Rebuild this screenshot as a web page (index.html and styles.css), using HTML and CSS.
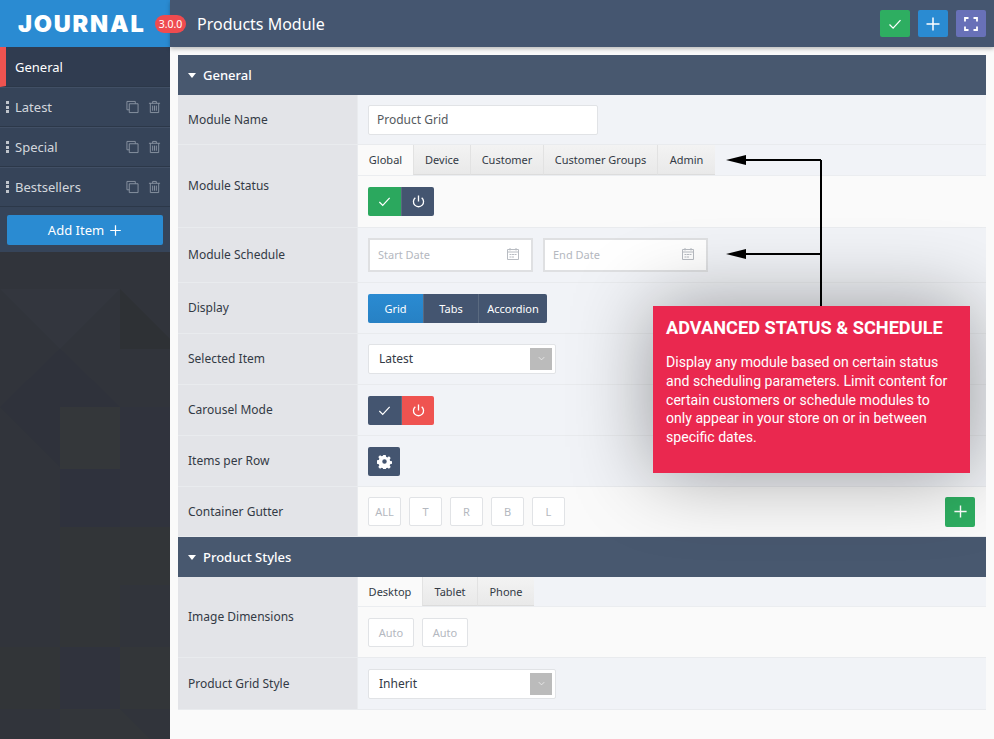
FILE: index.html
```html
<!DOCTYPE html>
<html lang="en">
<head>
    <meta charset="UTF-8">
    <title>Products Module</title>
    <link rel="stylesheet" href="styles.css">
</head>
<body>
    <svg class="defs" width="0" height="0">
        <symbol id="i-check" viewBox="0 0 16 16"><path d="M2.500 8.500l3.600 3.600 7.400-8" fill="none" stroke="currentColor" stroke-width="1.300"/></symbol>
        <symbol id="i-power" viewBox="0 0 16 16"><path d="M8 1.500v6.500M4.600 4a5.400 5.400 0 1 0 6.800 0" fill="none" stroke="currentColor" stroke-width="1.400"/></symbol>
        <symbol id="i-plus" viewBox="0 0 16 16"><path d="M8 1.500v13M1.500 8h13" fill="none" stroke="currentColor" stroke-width="1.500"/></symbol>
        <symbol id="i-chevron" viewBox="0 0 16 16"><path d="M4 6l4 4 4-4" fill="none" stroke="currentColor" stroke-width="1.200"/></symbol>
        <symbol id="i-cal" viewBox="0 0 14 14"><path d="M1.500 2.500h11v10h-11zM1.500 5h11M4 1v2.500M10 1v2.500" fill="none" stroke="currentColor"/><path d="M3.500 7h2v1h-2zM6 7h2v1H6zM8.500 7h2v1h-2zM3.500 9.500h2v1h-2zM6 9.500h2v1H6z" fill="currentColor"/></symbol>
        <symbol id="i-copy" viewBox="0 0 14 14"><path d="M3.500 10H1V1h9v2.500" fill="none" stroke="currentColor"/><path d="M3.500 3.500h9.500V13H3.500z" fill="none" stroke="currentColor"/></symbol>
        <symbol id="i-trash" viewBox="0 0 14 14"><path d="M1 3h12M5 3V1h4v2M2.500 3v10h9V3M5 5.500V11M7 5.500V11M9 5.500V11" fill="none" stroke="currentColor"/></symbol>
        <symbol id="i-gear" viewBox="0 0 16 16"><path fill-rule="evenodd" d="M6.700 1h2.600l.4 2 1.300.6 1.800-1.100 1.800 1.800-1.100 1.800.6 1.300 2 .4v2.600l-2 .4-.6 1.300 1.100 1.800-1.800 1.800-1.800-1.100-1.300.6-.4 2H6.700l-.4-2-1.300-.6-1.800 1.100-1.800-1.800 1.100-1.800-.6-1.300-2-.4V6.700l2-.4.6-1.300-1.100-1.800 1.800-1.800L5 2.500l1.300-.6zM8 5.600a2.400 2.400 0 1 0 0 4.800 2.400 2.400 0 0 0 0-4.800z" fill="currentColor"/></symbol>
        <symbol id="i-expand" viewBox="0 0 16 16"><path d="M2 5.500V2h3.500M10.500 2H14v3.500M14 10.500V14h-3.500M5.500 14H2v-3.500" fill="none" stroke="currentColor" stroke-width="1.800"/></symbol>
    </svg>

    <div class="page">
        <aside class="sidebar">
            <div class="logo"><span class="logo-text">JOURNAL</span><span class="version">3.0.0</span></div>
            <div class="side-item side-active">General</div>
            <div class="side-item">
                <span class="grip"></span><span class="side-name">Latest</span>
                <svg class="side-icon"><use href="#i-copy"/></svg>
                <svg class="side-icon"><use href="#i-trash"/></svg>
            </div>
            <div class="side-item">
                <span class="grip"></span><span class="side-name">Special</span>
                <svg class="side-icon"><use href="#i-copy"/></svg>
                <svg class="side-icon"><use href="#i-trash"/></svg>
            </div>
            <div class="side-item">
                <span class="grip"></span><span class="side-name">Bestsellers</span>
                <svg class="side-icon"><use href="#i-copy"/></svg>
                <svg class="side-icon"><use href="#i-trash"/></svg>
            </div>
            <div class="side-add">
                <button class="add-btn" type="button">Add Item <svg class="add-plus"><use href="#i-plus"/></svg></button>
            </div>
            <!-- fondo con triangulos -->
            <svg class="side-pattern" viewBox="0 0 170 487" preserveAspectRatio="none">
                <path d="M0 37l60 60 60-60z" fill="#33363e"/>
                <path d="M120 37v60h50V87z" fill="#2e3135"/>
                <path d="M0 155l60-58 60 58H60v60z" fill="#2f323b"/>
                <path d="M60 155h60v62H60z" fill="#34373a"/>
                <path d="M120 155h50v120h-50z" fill="#30333d"/>
                <path d="M60 217h60v58H60z" fill="#2f323d"/>
                <path d="M60 275h110v58H60z" fill="#323538"/>
                <path d="M60 333h60v62H60z" fill="#323538"/>
                <path d="M60 395h60v62H60z" fill="#30333d"/>
                <path d="M120 395h50v62h-50z" fill="#333639"/>
                <path d="M0 395h60v62H0z" fill="#323538"/>
                <path d="M60 457h60l30 30H60z" fill="#33363a"/>
            </svg>
        </aside>

        <div class="main">
            <header class="topbar">
                <h1 class="title">Products Module</h1>
                <div class="top-actions">
                    <button class="top-btn btn-green" type="button"><svg class="top-icon"><use href="#i-check"/></svg></button>
                    <button class="top-btn btn-blue" type="button"><svg class="top-icon"><use href="#i-plus"/></svg></button>
                    <button class="top-btn btn-purple" type="button"><svg class="top-icon"><use href="#i-expand"/></svg></button>
                </div>
            </header>

            <div class="content">
                <h2 class="section-head"><span class="caret"></span>General</h2>

                <div class="row row-name">
                    <div class="label">Module Name</div>
                    <div class="field"><div class="text-input">Product Grid</div></div>
                </div>

                <div class="row row-status">
                    <div class="label label-up">Module Status</div>
                    <div class="field field-tabs">
                        <div class="tabs">
                            <span class="tab tab-active tab-global">Global</span>
                            <span class="tab tab-device">Device</span>
                            <span class="tab tab-customer">Customer</span>
                            <span class="tab tab-groups">Customer Groups</span>
                            <span class="tab tab-admin">Admin</span>
                        </div>
                        <div class="tab-body">
                            <div class="toggle">
                                <span class="seg seg-green"><svg class="seg-icon"><use href="#i-check"/></svg></span>
                                <span class="seg seg-dark"><svg class="seg-icon"><use href="#i-power"/></svg></span>
                            </div>
                        </div>
                    </div>
                </div>

                <div class="row row-schedule">
                    <div class="label label-up">Module Schedule</div>
                    <div class="field field-dates">
                        <div class="date-input">Start Date<svg class="cal"><use href="#i-cal"/></svg></div>
                        <div class="date-input">End Date<svg class="cal"><use href="#i-cal"/></svg></div>
                    </div>
                </div>

                <div class="row row-std">
                    <div class="label label-up">Display</div>
                    <div class="field">
                        <div class="toggle">
                            <span class="seg seg-text seg-blue seg-grid">Grid</span>
                            <span class="seg seg-text seg-dark seg-tabs">Tabs</span>
                            <span class="seg seg-text seg-dark seg-acc">Accordion</span>
                        </div>
                    </div>
                </div>

                <div class="row row-std">
                    <div class="label label-up">Selected Item</div>
                    <div class="field">
                        <div class="select select-up">Latest<span class="select-arrow"><svg class="chevron"><use href="#i-chevron"/></svg></span></div>
                    </div>
                </div>

                <div class="row row-std">
                    <div class="label label-up">Carousel Mode</div>
                    <div class="field">
                        <div class="toggle">
                            <span class="seg seg-dark"><svg class="seg-icon"><use href="#i-check"/></svg></span>
                            <span class="seg seg-red"><svg class="seg-icon"><use href="#i-power"/></svg></span>
                        </div>
                    </div>
                </div>

                <div class="row row-std">
                    <div class="label label-up">Items per Row</div>
                    <div class="field">
                        <div class="toggle"><span class="seg seg-dark seg-gear"><svg class="seg-icon"><use href="#i-gear"/></svg></span></div>
                    </div>
                </div>

                <div class="row row-gutter">
                    <div class="label">Container Gutter</div>
                    <div class="field field-white field-gutter">
                        <span class="small-input">ALL</span>
                        <span class="small-input">T</span>
                        <span class="small-input">R</span>
                        <span class="small-input">B</span>
                        <span class="small-input">L</span>
                        <button class="gutter-add" type="button"><svg class="seg-icon"><use href="#i-plus"/></svg></button>
                    </div>
                </div>

                <h2 class="section-head"><span class="caret"></span>Product Styles</h2>

                <div class="row row-dims">
                    <div class="label label-up">Image Dimensions</div>
                    <div class="field field-tabs">
                        <div class="tabs tabs-short">
                            <span class="tab tab-active tab-desktop">Desktop</span>
                            <span class="tab tab-tablet">Tablet</span>
                            <span class="tab tab-phone">Phone</span>
                        </div>
                        <div class="tab-body tab-body-auto">
                            <span class="small-input small-auto">Auto</span>
                            <span class="small-input small-auto">Auto</span>
                        </div>
                    </div>
                </div>

                <div class="row row-last">
                    <div class="label">Product Grid Style</div>
                    <div class="field">
                        <div class="select">Inherit<span class="select-arrow"><svg class="chevron"><use href="#i-chevron"/></svg></span></div>
                    </div>
                </div>

                <!-- flechas y nota encima del formulario -->
                <svg class="arrows" width="112" height="160" viewBox="0 0 112 160">
                    <path d="M95 14v146M18 14h77M18 108h77" fill="none" stroke="#000" stroke-width="2"/>
                    <path d="M0 14l20-5v10zM0 108l20-5v10z" fill="#000"/>
                </svg>
                <div class="callout">
                    <h3 class="callout-title">ADVANCED STATUS &amp; SCHEDULE</h3>
                    <p class="callout-text">Display any module based on certain status and scheduling parameters. Limit content for certain customers or schedule modules to only appear in your store on or in between specific dates.</p>
                </div>
            </div>
        </div>
    </div>
</body>
</html>
```

FILE: styles.css
```css
* {
    box-sizing: border-box;
}

html, body {
    margin: 0;
    padding: 0;
    height: 100%;
    overflow: hidden;
}

body {
    background-color: #fafafa;
    color: #333a45;
    font-family: "Noto Sans", Arial, sans-serif;
    font-size: 12px;
}

.defs {
    position: absolute;
}

.page {
    display: flex;
    height: 739px;
}

/* Barra lateral */
.sidebar {
    width: 170px;
    flex: none;
    display: flex;
    flex-direction: column;
    background-color: #31343b;
    color: #fff;
}

.logo {
    height: 47px;
    flex: none;
    display: flex;
    align-items: center;
    padding-left: 18px;
    background-color: #2a8bd2;
    position: relative;
}

.logo-text {
    font-family: Inter, "Liberation Sans", sans-serif;
    font-weight: 900;
    font-size: 23.500px;
    letter-spacing: 1.800px;
}

.version {
    position: absolute;
    left: 155px;
    top: 15px;
    width: 31px;
    height: 18px;
    border-radius: 9px;
    background-color: #ef4b4f;
    font-size: 10.500px;
    line-height: 18px;
    text-align: center;
    z-index: 2;
}

.side-item {
    height: 40px;
    flex: none;
    display: flex;
    align-items: center;
    padding: 0 9px 0 6px;
    background-color: #364459;
    border-bottom: 1px solid #2c3849;
    border-top: 1px solid #414f65;
    font-size: 13px;
    color: #d3d7dd;
}

.side-active {
    background-color: #303c50;
    border-left: 6px solid #ef5350;
    border-top: 0;
    padding-left: 9px;
    color: #fff;
}

.grip {
    width: 3px;
    height: 12px;
    margin-right: 6px;
    background: repeating-linear-gradient(#c0c5cc 0 3px, transparent 3px 4.500px);
}

.side-name {
    flex: 1;
}

.side-icon {
    width: 13px;
    height: 14px;
    margin-left: 9px;
    color: #8b95a3;
}

.side-add {
    height: 45px;
    flex: none;
    padding: 8px 7px 7px;
    background-color: #364459;
}

.add-btn {
    width: 156px;
    height: 30px;
    display: flex;
    align-items: center;
    justify-content: center;
    gap: 5px;
    border: none;
    border-radius: 2px;
    background-color: #2a8bd2;
    color: #fff;
    font-family: inherit;
    font-size: 13px;
}

.add-plus {
    width: 13px;
    height: 13px;
}

.side-pattern {
    flex: 1;
    width: 170px;
    min-height: 0;
}

/* Parte principal */
.main {
    flex: 1;
    min-width: 0;
}

.topbar {
    height: 47px;
    display: flex;
    align-items: center;
    justify-content: space-between;
    padding: 0 8px 0 27px;
    background-color: #455670;
    box-shadow: 0 2px 4px rgba(0, 0, 0, 0.25);
    position: relative;
}

.title {
    margin: 0;
    color: #fff;
    font-size: 16px;
    font-weight: 400;
}

.top-actions {
    display: flex;
    gap: 8px;
}

.top-btn {
    width: 30px;
    height: 27px;
    padding: 0;
    display: flex;
    align-items: center;
    justify-content: center;
    border: none;
    border-radius: 2px;
    color: #fff;
}

.top-icon {
    width: 16px;
    height: 16px;
}

.btn-green {
    background-color: #2eae61;
}

.btn-blue {
    background-color: #2a8bd2;
}

.btn-purple {
    background-color: #6871b8;
}

.content {
    margin: 8px 8px 0;
    position: relative;
    overflow: hidden;
}

.section-head {
    height: 40px;
    margin: 0;
    display: flex;
    align-items: center;
    padding-left: 10px;
    background-color: #48586f;
    color: #fff;
    font-size: 13px;
    font-weight: 500;
}

.caret {
    width: 0;
    height: 0;
    margin-right: 7px;
    border-left: 4.500px solid transparent;
    border-right: 4.500px solid transparent;
    border-top: 5px solid #fff;
}

.row {
    display: flex;
    border-bottom: 1px solid #e9ebee;
}

.row-name {
    height: 50px;
}

.row-status {
    height: 83px;
}

.row-schedule {
    height: 55px;
}

.row-std {
    height: 51px;
}

.row-gutter {
    height: 50px;
}

.row-dims {
    height: 81px;
}

.row-last {
    height: 52px;
}

.label {
    width: 180px;
    flex: none;
    display: flex;
    align-items: center;
    padding-left: 10px;
    background-color: #e3e4e8;
    border-right: 1px solid #e9ebee;
    color: #333a45;
}

.label-up {
    padding-bottom: 2px;
}

.field {
    flex: 1;
    display: flex;
    align-items: center;
    padding-left: 10px;
    background-color: #f1f3f7;
}

.field-white, .field-tabs {
    background-color: #fafafa;
}

.field-tabs {
    flex-direction: column;
    align-items: stretch;
    padding-left: 0;
}

.tabs {
    height: 31px;
    display: flex;
    flex: none;
    background-color: #f1f3f7;
    border-bottom: 1px solid #ebedf0;
}

.tabs-short {
    height: 30px;
}

.tab {
    height: 100%;
    display: flex;
    align-items: center;
    justify-content: center;
    background: linear-gradient(#f3f3f3, #e9e9e9);
    border-left: 1px solid #e2e2e2;
    border-bottom: 1px solid #dcdcdc;
    font-size: 11px;
}

.tab-active {
    background: #fafafa;
    border-left: 0;
    border-bottom-color: #fafafa;
}

.tab-global { width: 55px; }
.tab-device { width: 57px; }
.tab-customer { width: 73px; }
.tab-groups { width: 114px; }
.tab-admin { width: 58px; }
.tab-desktop { width: 64px; }
.tab-tablet { width: 55px; }
.tab-phone { width: 57px; }

.tab-body {
    flex: 1;
    display: flex;
    align-items: center;
    padding-left: 10px;
}

.tab-body-auto {
    gap: 8px;
}

.text-input {
    width: 230px;
    height: 30px;
    display: flex;
    align-items: center;
    padding-left: 8px;
    background-color: #fff;
    border: 1px solid #e1e3e6;
    border-radius: 2px;
    color: #555a60;
}

.toggle {
    display: flex;
}

.seg {
    width: 33px;
    height: 29px;
    display: flex;
    align-items: center;
    justify-content: center;
    color: #fff;
}

.seg:first-child {
    border-radius: 2px 0 0 2px;
}

.seg:last-child {
    border-radius: 0 2px 2px 0;
    border-left: 1px solid #5a6a80;
}

.seg:only-child {
    width: 32px;
    border: 0;
    border-radius: 2px;
}

.seg-icon {
    width: 15px;
    height: 15px;
}

.seg-green {
    background-color: #2ba85e;
}

.seg-dark {
    background-color: #445570;
}

.seg-red {
    background-color: #ef5350;
}

.seg-blue {
    background: linear-gradient(#2a8bd2, #2781c4);
}

.seg-text {
    font-size: 11px;
}

.seg-grid { width: 55px; }
.seg-tabs { width: 55px; border-left: 1px solid #5a6a80; }
.seg-acc { width: 69px; }

.field-dates {
    gap: 10px;
}

.date-input {
    width: 165px;
    height: 34px;
    display: flex;
    align-items: center;
    justify-content: space-between;
    padding: 0 11px 2px 8px;
    background-color: #fff;
    border: 2px solid #dfe0e2;
    color: #b4b8c0;
    font-size: 11px;
}

.cal {
    width: 14px;
    height: 14px;
    color: #b8bcc2;
}

.select {
    width: 188px;
    height: 30px;
    display: flex;
    align-items: center;
    justify-content: space-between;
    padding: 0 3px 0 10px;
    background-color: #fff;
    border: 1px solid #e1e3e6;
    border-radius: 2px;
}

.select-up {
    padding-bottom: 1px;
}

.select-arrow {
    width: 22px;
    height: 22px;
    display: flex;
    align-items: center;
    justify-content: center;
    background-color: #bbb;
    color: #eee;
}

.chevron {
    width: 11px;
    height: 11px;
}

.field-gutter {
    gap: 8px;
}

.small-input {
    width: 33px;
    height: 29px;
    display: flex;
    align-items: center;
    justify-content: center;
    background-color: #fff;
    border: 1px solid #e1e3e6;
    border-radius: 2px;
    color: #b4b8c0;
    font-size: 11px;
}

.small-auto {
    width: 46px;
}

.gutter-add {
    width: 30px;
    height: 30px;
    padding: 0;
    margin-left: auto;
    margin-right: 11px;
    display: flex;
    align-items: center;
    justify-content: center;
    border: none;
    border-radius: 2px;
    background-color: #2eae61;
    color: #fff;
}

/* Flechas y nota */
.arrows {
    position: absolute;
    left: 548px;
    top: 91px;
}

.callout {
    position: absolute;
    left: 475px;
    top: 251px;
    width: 317px;
    height: 167px;
    padding: 12px 13px 0;
    background-color: #ea284f;
    box-shadow: 0 0 80px rgba(0, 0, 0, 0.38);
    color: #fff;
    font-family: Roboto, Arial, sans-serif;
}

.callout-title {
    margin: 0 0 15px;
    font-size: 18.200px;
    font-weight: 700;
    line-height: 20px;
}

.callout-text {
    margin: 0;
    font-size: 14.100px;
    line-height: 18.800px;
}
```
